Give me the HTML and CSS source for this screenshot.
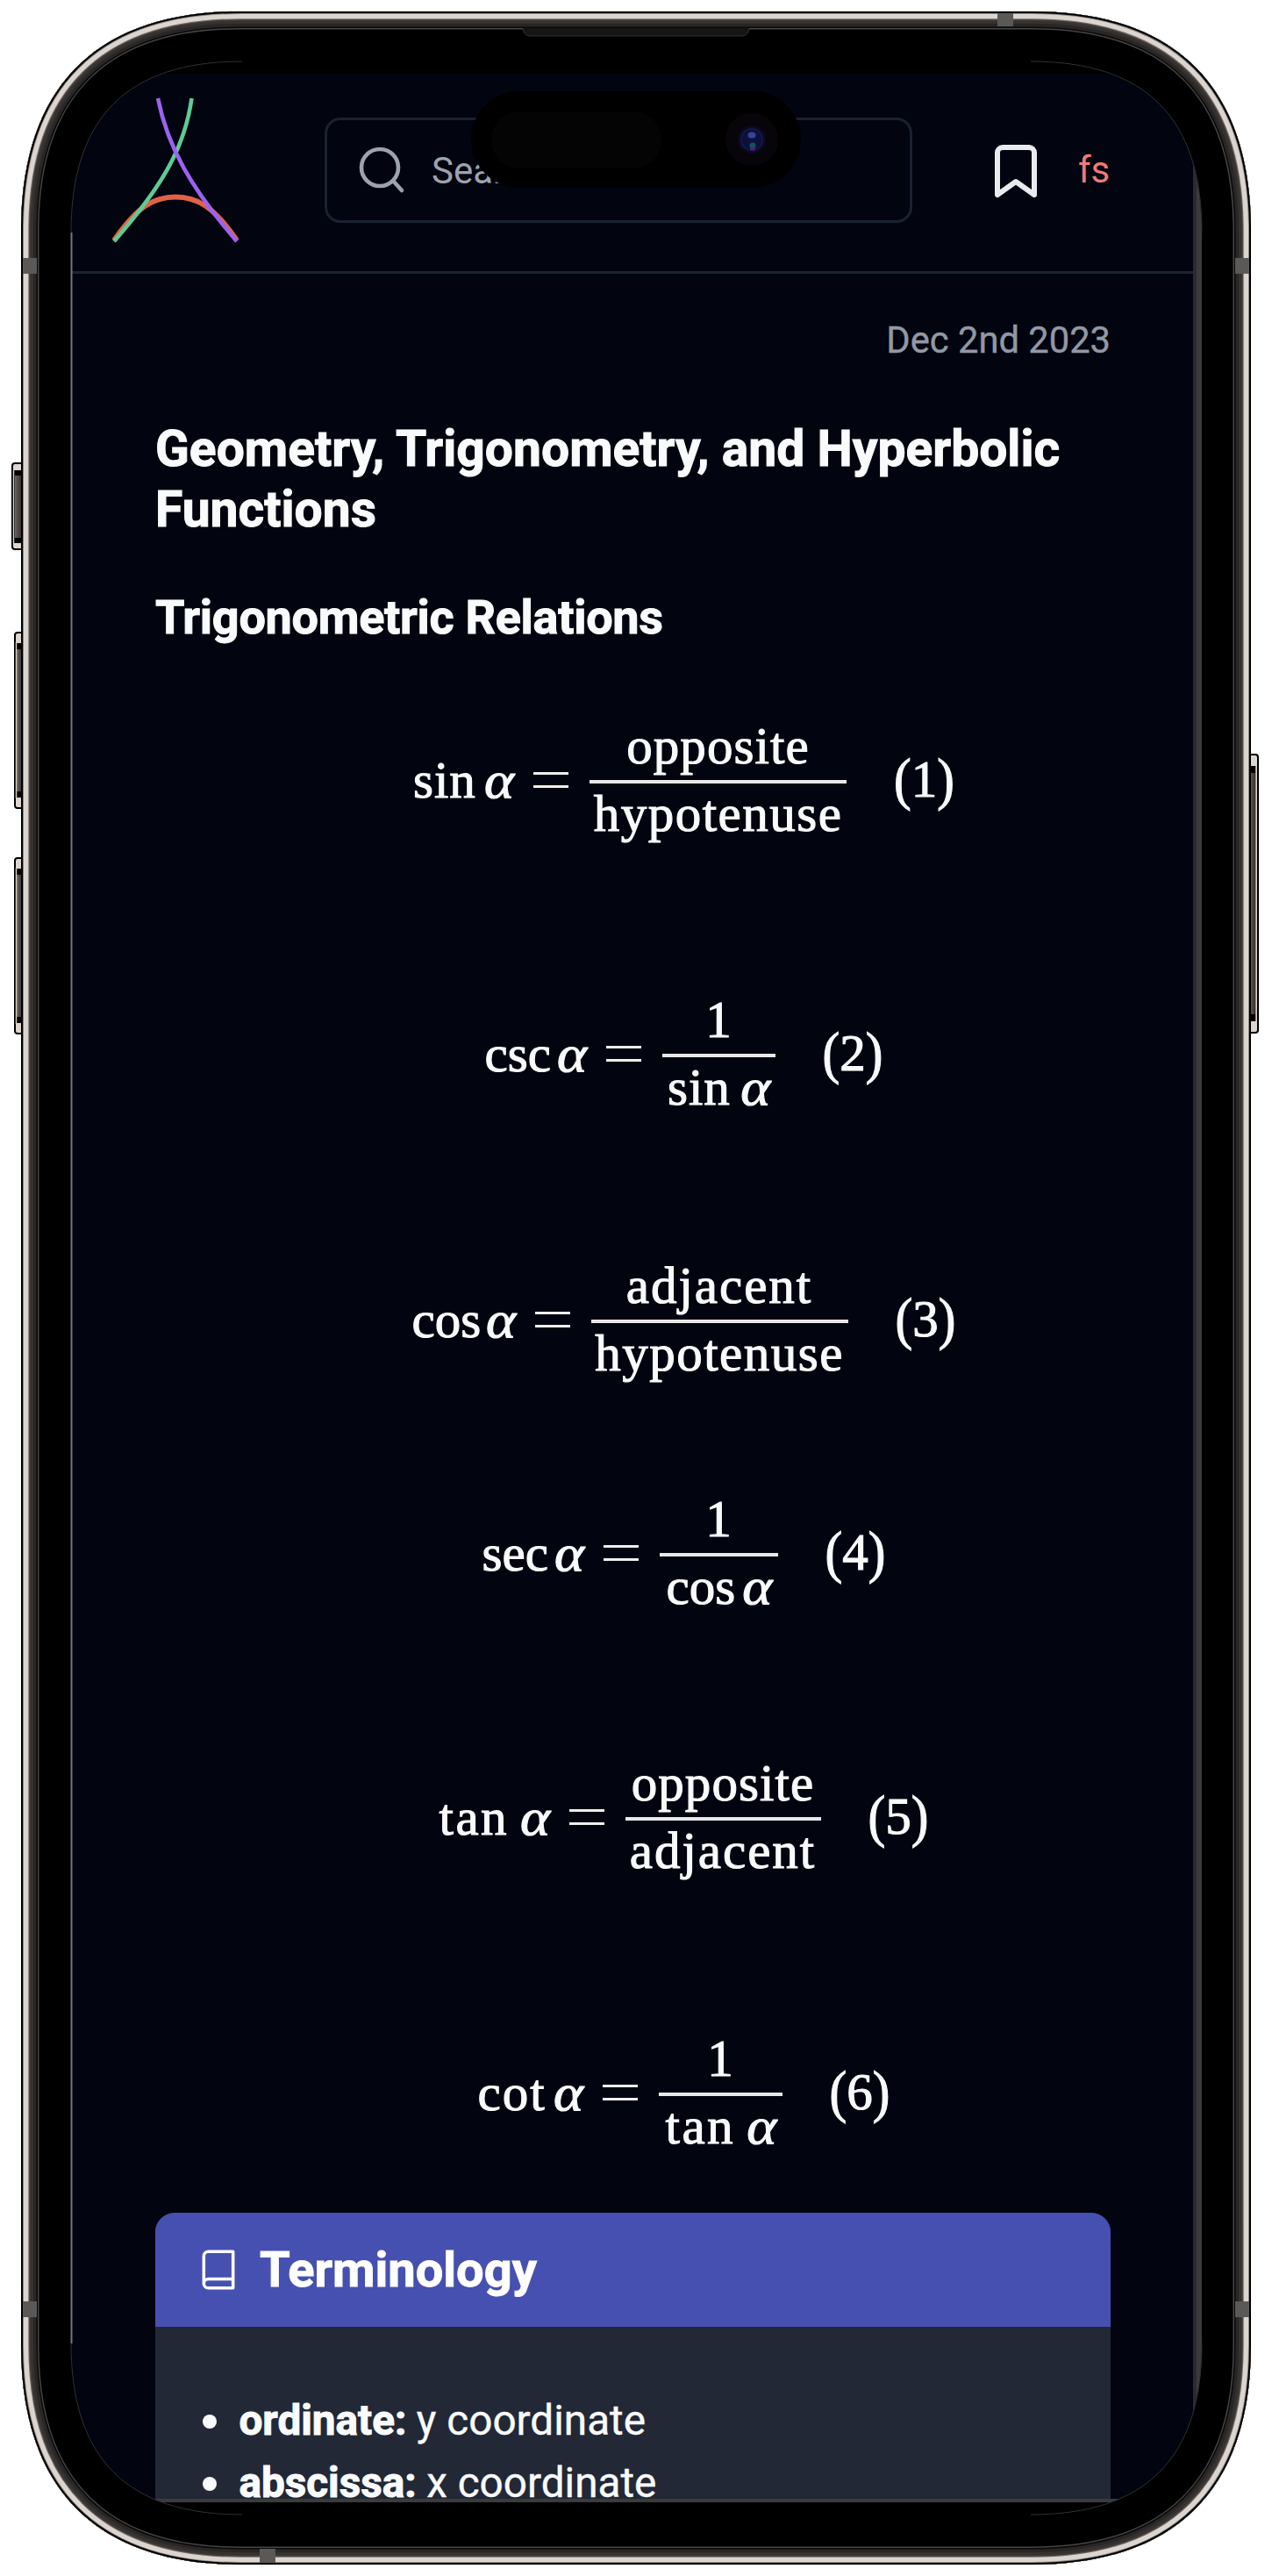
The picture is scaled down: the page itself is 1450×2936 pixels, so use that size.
FILE: index.html
```html
<!DOCTYPE html>
<html lang="en">
<head>
<meta charset="utf-8">
<title>Geometry, Trigonometry, and Hyperbolic Functions</title>
<link rel="stylesheet" href="styles.css">
</head>
<body>
<div class="device">
  <div class="display">
  <div class="screen">
    <header class="topbar">
      <svg class="logo" viewBox="0 0 146 170" fill="none" stroke-width="4.6">
        <path stroke="#e06244" stroke-width="6" d="M3 164C30 125 48 114.500 73 114.500S116 125 143 164"/>
        <path stroke="#5ecb97" d="M91.500 2C84 56 60 100 3 165"/>
        <path stroke="#9b62f2" d="M53 2C64 58 92 106 143 165"/>
      </svg>
      <div class="search">
        <svg class="search-icon" viewBox="0 0 56 56" fill="none" stroke="#9ca3af" stroke-width="4.600" stroke-linecap="round"><circle cx="25" cy="25" r="21"/><path d="M40 40l10 11"/></svg>
        <span>Search</span>
      </div>
      <svg class="bookmark" viewBox="0 0 24 24" fill="none" stroke="#e9ebef" stroke-width="2" stroke-linejoin="round"><path d="M19 21l-7-5-7 5V5a2 2 0 0 1 2-2h10a2 2 0 0 1 2 2z"/></svg>
      <span class="user">fs</span>
    </header>
    <main class="note">
      <time class="date">Dec 2nd 2023</time>
      <h1>Geometry, Trigonometry, and Hyperbolic Functions</h1>
      <h2>Trigonometric Relations</h2>
      <div class="equations">
        <div class="eq w1"><span class="fn sin">sin</span><i>α</i><span class="equals"></span><span class="frac"><span class="opp">opposite</span><span class="hyp">hypotenuse</span></span><span class="tag"><b>(</b>1<b>)</b></span></div>
        <div class="eq w2"><span class="fn csc">csc</span><i>α</i><span class="equals"></span><span class="frac"><span>1</span><span><span class="fn sin">sin</span><i>α</i></span></span><span class="tag"><b>(</b>2<b>)</b></span></div>
        <div class="eq w3"><span class="fn cos">cos</span><i>α</i><span class="equals"></span><span class="frac"><span class="adj">adjacent</span><span class="hyp">hypotenuse</span></span><span class="tag"><b>(</b>3<b>)</b></span></div>
        <div class="eq w4"><span class="fn sec">sec</span><i>α</i><span class="equals"></span><span class="frac"><span>1</span><span><span class="fn cos">cos</span><i>α</i></span></span><span class="tag"><b>(</b>4<b>)</b></span></div>
        <div class="eq w5"><span class="fn tan">tan</span><i>α</i><span class="equals"></span><span class="frac"><span class="opp">opposite</span><span class="adj">adjacent</span></span><span class="tag"><b>(</b>5<b>)</b></span></div>
        <div class="eq w6"><span class="fn cot">cot</span><i>α</i><span class="equals"></span><span class="frac"><span>1</span><span><span class="fn tan">tan</span><i>α</i></span></span><span class="tag"><b>(</b>6<b>)</b></span></div>
      </div>
      <section class="card">
        <div class="card-head">
          <svg class="book" viewBox="0 0 24 24" fill="none" stroke="#fff" stroke-width="1.700" stroke-linejoin="round"><path d="M4 19.500v-15A2.500 2.500 0 0 1 6.500 2H20v20H6.500a2.500 2.500 0 0 1 0-5H20"/></svg>
          <h3>Terminology</h3>
        </div>
        <ul>
          <li><strong>ordinate:</strong> y coordinate</li>
          <li><strong>abscissa:</strong> x coordinate</li>
        </ul>
      </section>
    </main>
  </div>
  </div>

  <svg class="shell" viewBox="0 0 1450 2936">
    <defs>
      <path id="outer" d="M24 263C24 99 110 13 274 13H1176C1340 13 1426 99 1426 263V2673C1426 2837 1340 2923 1176 2923H274C110 2923 24 2837 24 2673Z"/>
      <clipPath id="body"><use href="#outer"/></clipPath>
      <linearGradient id="keyL"><stop offset="0" stop-color="#6b645f"/><stop offset=".3" stop-color="#57504d"/><stop offset="1" stop-color="#35302f"/></linearGradient>
      <radialGradient id="lens"><stop offset="0" stop-color="#0a1440"/><stop offset=".6" stop-color="#0d1038"/><stop offset="1" stop-color="#080918"/></radialGradient>
    </defs>
    <!-- side keys -->
    <g fill="#ddd5cf" stroke="#000" stroke-width="2">
      <rect x="14" y="528" width="18" height="98" rx="3"/>
      <rect x="17" y="721" width="16" height="200" rx="3"/>
      <rect x="17" y="978" width="16" height="200" rx="3"/>
      <rect x="1418" y="860" width="16" height="317" rx="3"/>
    </g>
    <g fill="#000"><path d="M16 536h10v83H16zM19 733h8v176h-8zM19 990h8v176h-8zM1424 873h8v291h-8z"/></g>
    <g fill="url(#keyL)"><path d="M17 542h8v71h-8z"/><path d="M19 740h7v162h-7z"/><path d="M19 997h7v162h-7z"/><path d="M1425 881h6v275h-6z"/></g>
    <path stroke="#d8cdc2" stroke-width="1.500" d="M18.500 732v178M18.500 989v178M15.500 536v83M1432 872v293"/>
    <!-- bezel with the display cut out -->
    <path fill="#000" fill-rule="evenodd" d="M24 263C24 99 110 13 274 13H1176C1340 13 1426 99 1426 263V2673C1426 2837 1340 2923 1176 2923H274C110 2923 24 2837 24 2673ZM81 265C81 134 145 70 276 70H1175C1306 70 1370 134 1370 265V2671C1370 2802 1306 2866 1175 2866H276C145 2866 81 2802 81 2671Z"/>
    <g fill="none" clip-path="url(#body)">
      <use href="#outer" stroke="#454545" stroke-width="41"/>
      <use href="#outer" stroke="#0a0a0a" stroke-width="38"/>
      <use href="#outer" stroke="#292625" stroke-width="35"/>
      <use href="#outer" stroke="#35312f" stroke-width="28"/>
      <use href="#outer" stroke="#403b38" stroke-width="22"/>
      <use href="#outer" stroke="#77706b" stroke-width="18.500"/>
      <use href="#outer" stroke="#dcd5cf" stroke-width="16.500"/>
      <use href="#outer" stroke="#8b8580" stroke-width="6"/>
      <use href="#outer" stroke="#000" stroke-width="4"/>
      <g fill="#5b5957"><path d="M26 294h16v18H26zM1408 294h16v18h-16zM26 2623h16v18H26zM1408 2623h16v18h-16zM1137 15h18v15h-18zM296 2905h18v16h-18z"/></g>
    </g>
    <g fill="none" stroke="#303030">
      <path d="M81 265C81 134 145 70 276 70M1175 70C1306 70 1370 134 1370 265M1370 2671C1370 2802 1306 2866 1175 2866M276 2866C145 2866 81 2802 81 2671"/>
      <path stroke="#777" stroke-width="2" d="M81.500 265V2671"/>
    </g>
    <!-- earpiece -->
    <path fill="#151515" stroke="#303030" d="M596 32q1 9 8 9h242q7 0 8-9"/>
    <!-- camera island -->
    <rect x="537" y="104" width="376" height="110" rx="55" fill="#000"/>
    <rect x="560" y="127" width="194" height="65" rx="32" fill="#040404"/>
    <circle cx="857" cy="159" r="30" fill="#070509"/>
    <circle cx="857" cy="159" r="16" fill="url(#lens)"/>
    <circle cx="857" cy="159" r="12" fill="none" stroke="#161a50" stroke-width="1.500"/>
    <ellipse cx="857" cy="154" rx="4.500" ry="3.500" fill="#3a429c"/>
    <ellipse cx="858" cy="166" rx="3.500" ry="3.500" fill="#17505f"/>
    <ellipse cx="858" cy="170" rx="3" ry="1.500" fill="#5a1b70"/>
  </svg>
</div>
</body>
</html>
```
FILE: styles.css
```css
* { box-sizing: border-box; }
body { margin: 0; background: #fff; }
.device {
  position: relative;
  width: 1450px;
  height: 2936px;
  padding: 70px 80px;
  overflow: hidden;
}
.shell { position: absolute; inset: 0; width: 1450px; height: 2936px; }
.display {
  width: 1290px;
  height: 2796px;
  padding-top: 14px;
  border-radius: 160px;
  background: #000;
  overflow: hidden;
}
.screen {
  width: 1290px;
  height: 2768px;
  overflow: hidden;
  border-right: 6px solid #3b3b3b;
  border-bottom: 4px solid #3b3b3b;
  box-shadow: inset -4px 0 #2b2b2b;
  background: #02040f;
  color: #f9fafb;
  font-family: Roboto, sans-serif;
}
.topbar {
  display: flex;
  align-items: center;
  width: 1280px;
  height: 228px;
  padding: 0 90px 0 47px;
  border-bottom: 3px solid #1b2431;
  font-size: 42px;
}
.logo { flex: none; width: 146px; height: 170px; margin-top: -4px; }
.search {
  display: flex;
  flex: none;
  align-items: center;
  gap: 28px;
  width: 670px;
  height: 120px;
  margin: -5px 0 0 97px;
  padding: 0 35px;
  border: 3px solid #1a2230;
  border-radius: 18px;
  color: #9ca3af;
}
.search-icon { width: 56px; height: 56px; }
.bookmark { flex: none; width: 72px; height: 72px; margin: -4px 0 0 82px; }
.user { margin: -6px 0 0 35px; color: #ee7b78; }
.note { display: flex; flex-direction: column; width: 1280px; padding: 0 94px 0 97px; }
.date { align-self: flex-end; margin-top: 50px; color: #9298a5; font-size: 41.7px; line-height: 52px; -webkit-text-stroke: .4px #9298a5; }
h1, h2, h3, strong { font-weight: 700; -webkit-text-stroke: 1px #f9fafb; }
h1 { margin: 63px 0 0; font-size: 57px; line-height: 69px; }
h2 { margin: 56px 0 0; font-size: 54px; line-height: 66px; letter-spacing: -.3px; }
.equations {
  display: grid;
  grid-template-rows: 303px 322px 284px 248px 354px 274px;
  justify-items: center;
  align-items: center;
  margin-left: 114px;
  font-family: "Liberation Serif", serif;
  font-size: 59px;
  line-height: 78px;
}
.eq { display: flex; align-items: center; white-space: nowrap; -webkit-text-stroke: 1.1px #f9fafb; }
.eq i { display: inline-block; width: 35px; margin-left: 10px; transform: scaleX(1.1); transform-origin: 0 50%; }
.fn { display: inline-block; }
.sin { width: 71px; letter-spacing: 1px; }
.csc { width: 72px; }
.cos { width: 74px; }
.sec { width: 72px; }
.tan { width: 82px; letter-spacing: 2.5px; }
.cot { width: 76px; letter-spacing: 2px; }
.frac .fn { text-align: left; }
.frac .tan { width: 80px; }
.opp { letter-spacing: 1.1px; }
.hyp { letter-spacing: 1.5px; }
.adj { letter-spacing: 2px; }
.equals { width: 40px; height: 18px; margin: 0 24px 0 21px; border: solid #eee; border-width: 3.5px 0; }
.frac { display: flex; flex-direction: column; text-align: center; }
.frac > span { height: 71px; line-height: 64px; }
.frac > span + span { border-top: 4px solid #e8e8ea; height: 71px; line-height: 69px; }
.tag { display: flex; width: 65px; margin-left: 54px; margin-right: 2px; margin-top: -2px; justify-content: space-between; align-items: center; }
.tag b { font-weight: 400; transform: scaleY(1.12); }
.w1 .frac, .w3 .frac { width: 293px; }
.w2 .frac { width: 129px; }
.w4 .frac { width: 135px; }
.w5 .frac { width: 223px; }
.w6 .frac { width: 141px; }
.card { height: 400px; overflow: hidden; border-radius: 22px 22px 0 0; background: #222835; }
.card-head { display: flex; align-items: center; gap: 22px; height: 130px; padding-left: 47px; background: #4650b0; }
.book { width: 50px; height: 50px; }
h3 { margin: 0; font-size: 56px; line-height: 64px; color: #fff; }
ul { list-style: none; margin: 0; padding: 72px 0 0 54px; font-size: 47.7px; line-height: 71px; }
li { display: flex; align-items: center; gap: .24em; -webkit-text-stroke: .4px #f9fafb; }
li::before { content: ""; width: 16px; height: 16px; margin-right: 14px; border-radius: 50%; background: #f9fafb; }
```
